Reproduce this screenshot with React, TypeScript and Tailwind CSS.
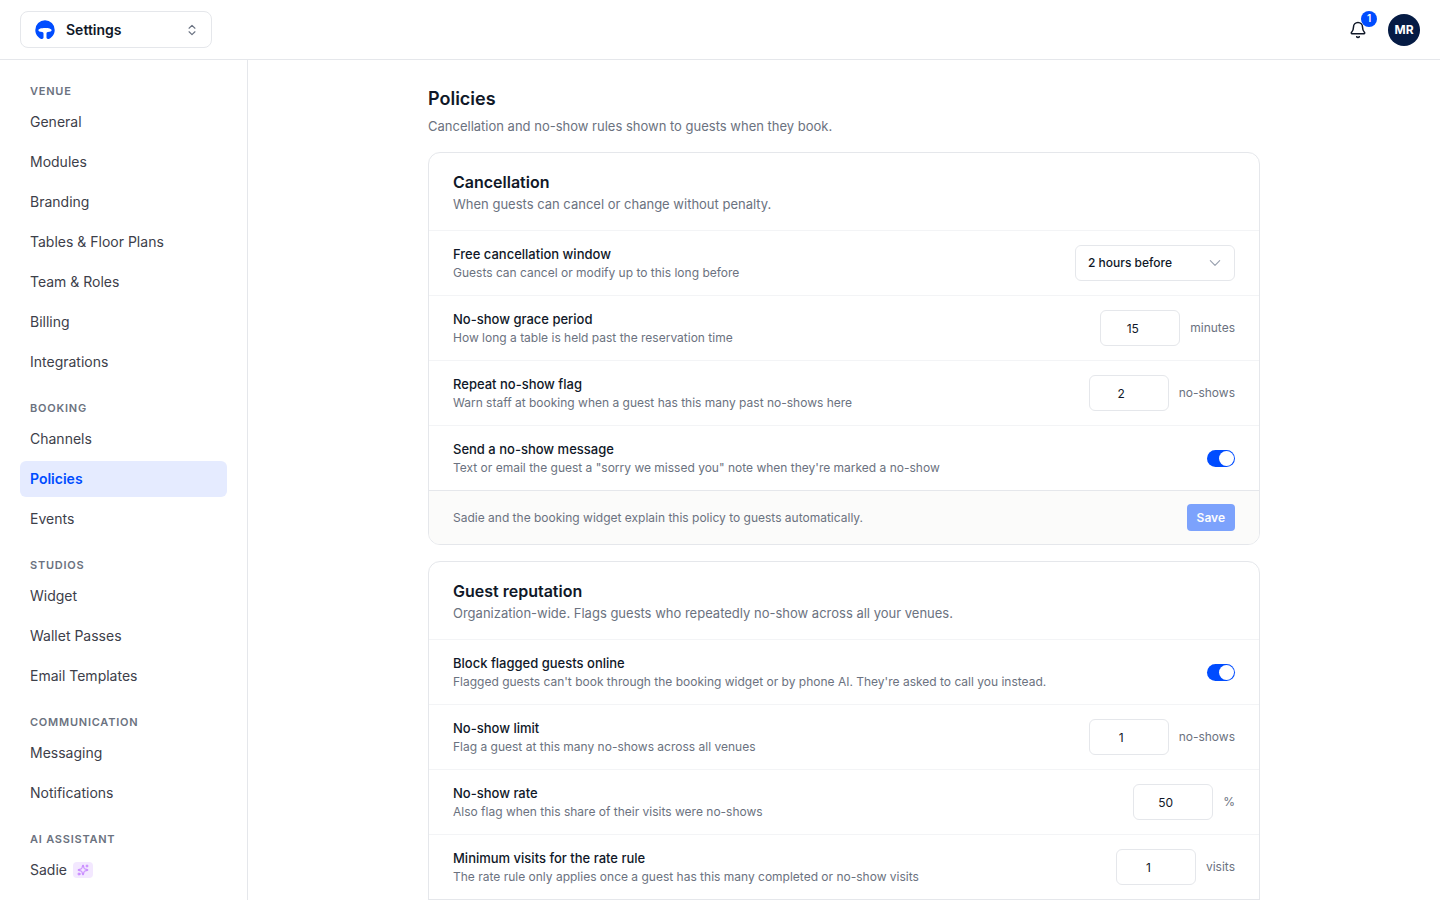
import { useState } from "react";
import { Bell, ChevronsUpDown, Sparkles } from "lucide-react";
import { clsx } from "clsx";

interface NavItem {
  label: string;
  ai?: boolean;
}

const NAV: { title: string; items: NavItem[] }[] = [
  {
    title: "Venue",
    items: [
      { label: "General" },
      { label: "Modules" },
      { label: "Branding" },
      { label: "Tables & Floor Plans" },
      { label: "Team & Roles" },
      { label: "Billing" },
      { label: "Integrations" },
    ],
  },
  {
    title: "Booking",
    items: [{ label: "Channels" }, { label: "Policies" }, { label: "Events" }],
  },
  {
    title: "Studios",
    items: [
      { label: "Widget" },
      { label: "Wallet Passes" },
      { label: "Email Templates" },
    ],
  },
  {
    title: "Communication",
    items: [{ label: "Messaging" }, { label: "Notifications" }],
  },
  { title: "AI Assistant", items: [{ label: "Sadie", ai: true }] },
];

const ACTIVE = "Policies";

function Logo() {
  return (
    <svg viewBox="0 0 20 20" className="size-5" aria-hidden="true">
      <path
        fill="#004cff"
        d="M10 0.2a9.7 9.7 0 0 1 9.7 9.7c0 4.1-2.5 7.600-6 9-1.100.4-2.200-.1-2.200-1.300v-4c0-.9.4-1.400 1.300-1.500 2.300-.3 3.800-1 3.800-1.900 0-1.300-2.900-2.200-6.600-2.200s-6.600.9-6.600 2.200c0 .9 1.500 1.600 3.800 1.900.9.1 1.300.6 1.300 1.500v4c0 1.200-1.100 1.700-2.200 1.300-3.500-1.400-6-4.900-6-9A9.700 9.700 0 0 1 10 .2Z"
      />
    </svg>
  );
}

function Header() {
  return (
    <header className="flex items-center justify-between border-b border-gray-200 px-5 py-[11px]">
      <button
        type="button"
        className="flex h-[37px] w-48 items-center gap-[11px] rounded-lg border border-gray-200 pr-3 pl-3.5 text-left"
      >
        <Logo />
        <span className="flex-1 text-sm font-semibold text-gray-900">
          Settings
        </span>
        <ChevronsUpDown size={14} className="text-gray-500" />
      </button>

      <div className="flex items-center gap-3">
        <button
          type="button"
          aria-label="Notifications, 1 unread"
          className="relative flex size-9 items-center justify-center text-gray-900"
        >
          <Bell size={18} />
          <span className="absolute -top-px -right-px flex size-4 items-center justify-center rounded-full bg-[#004cff] text-[10px] font-semibold text-white">
            1
          </span>
        </button>
        <button
          type="button"
          className="flex size-8 items-center justify-center rounded-full bg-[#051b44] text-xs font-bold text-white"
        >
          MR
        </button>
      </div>
    </header>
  );
}

function Sidebar() {
  return (
    <nav
      aria-label="Settings"
      className="flex w-62 shrink-0 flex-col gap-5 overflow-hidden border-r border-gray-200 px-5 pt-[23px]"
    >
      {NAV.map((group) => (
        <section key={group.title}>
          <h2 className="mb-1 px-2.5 text-[11px] leading-[17px] font-semibold tracking-[0.07em] text-[#6b7280] uppercase">
            {group.title}
          </h2>
          <ul className="space-y-1">
            {group.items.map((item) => (
              <li key={item.label}>
                <a
                  href="#"
                  aria-current={item.label === ACTIVE ? "page" : undefined}
                  className={clsx(
                    "flex h-9 items-center gap-1.5 rounded-md px-2.5 text-sm",
                    item.label === ACTIVE
                      ? "bg-[#e5ebff] font-semibold text-[#004cff]"
                      : "text-[#3d404a] hover:bg-gray-50",
                  )}
                >
                  {item.label}
                  {item.ai && (
                    <span className="flex h-4 w-5 items-center justify-center rounded bg-purple-100 text-purple-400">
                      <Sparkles size={12} />
                    </span>
                  )}
                </a>
              </li>
            ))}
          </ul>
        </section>
      ))}
    </nav>
  );
}

interface CardProps {
  title: string;
  description: string;
  note?: string;
  children: React.ReactNode;
}

function Card({ title, description, note, children }: Readonly<CardProps>) {
  return (
    <section className="overflow-hidden rounded-xl border border-gray-200 bg-white">
      <div className="px-6 pt-[17px] pb-4">
        <h2 className="text-base leading-6 font-semibold text-gray-900">
          {title}
        </h2>
        <p className="text-[13px] leading-5 text-[#6b7280]">{description}</p>
      </div>
      {children}
      <div className="flex min-h-13 items-center justify-between border-t border-gray-200 bg-[#fbfbfa] px-6 py-[13px]">
        {note && (
          <>
            <p className="text-xs text-[#6b7280]">{note}</p>
            <button
              type="button"
              disabled
              className="h-[27px] rounded bg-[#004cff] px-2.5 text-xs font-semibold text-white opacity-50"
            >
              Save
            </button>
          </>
        )}
      </div>
    </section>
  );
}

interface RowProps {
  id: string;
  label: string;
  hint: string;
  children: React.ReactNode;
}

function Row({ id, label, hint, children }: Readonly<RowProps>) {
  return (
    <div className="flex items-center justify-between gap-6 border-t border-gray-100 px-6 py-[13px]">
      <div>
        <label
          htmlFor={id}
          className="block text-[13px] leading-5 font-medium text-gray-900"
        >
          {label}
        </label>
        <p className="text-xs leading-[18px] text-[#6b7280]">{hint}</p>
      </div>
      {children}
    </div>
  );
}

interface NumberFieldProps {
  id: string;
  initial: number;
  unit: string;
}

function NumberField({ id, initial, unit }: Readonly<NumberFieldProps>) {
  const [value, setValue] = useState(String(initial));
  return (
    <div className="flex items-center gap-2.5">
      <input
        id={id}
        type="number"
        value={value}
        onChange={(e) => setValue(e.target.value)}
        className="h-9 w-20 rounded-md border border-gray-200 px-3 text-center text-xs text-gray-900"
      />
      <span className="text-xs text-[#6b7280]">{unit}</span>
    </div>
  );
}

function Toggle({ id }: Readonly<{ id: string }>) {
  return (
    <input
      id={id}
      type="checkbox"
      role="switch"
      defaultChecked
      className="flex h-[17px] w-7 cursor-pointer appearance-none items-center rounded-full bg-gray-300 px-px before:size-[15px] before:rounded-full before:bg-white checked:justify-end checked:bg-[#004cff]"
    />
  );
}

function WindowSelect({ id }: Readonly<{ id: string }>) {
  return (
    <div className="relative">
      <select
        id={id}
        defaultValue="2"
        className="h-9 w-40 appearance-none rounded-md border border-gray-200 bg-white px-3 text-xs font-medium text-gray-900"
      >
        <option value="1">1 hour before</option>
        <option value="2">2 hours before</option>
        <option value="24">24 hours before</option>
      </select>
      <svg
        viewBox="0 0 24 24"
        fill="none"
        stroke="currentColor"
        strokeWidth={1.75}
        strokeLinecap="round"
        strokeLinejoin="round"
        className="pointer-events-none absolute top-2.5 right-3 size-4 text-gray-400"
        aria-hidden="true"
      >
        <path d="m19 8.500-7 7-7-7" />
      </svg>
    </div>
  );
}

export default function App() {
  return (
    <div className="flex h-screen flex-col bg-white font-['Inter',sans-serif] antialiased">
      <Header />
      <div className="flex min-h-0 flex-1">
        <Sidebar />
        <main className="flex-1 overflow-y-auto px-6 pt-6 pb-12 [scrollbar-width:none]">
          <div className="mx-auto max-w-208">
            <h1 className="text-lg leading-[30px] font-semibold text-gray-900">
              Policies
            </h1>
            <p className="mt-0.5 mb-4 text-[13px] leading-5 text-[#6b7280]">
              Cancellation and no-show rules shown to guests when they book.
            </p>

            <div className="space-y-4">
              <Card
                title="Cancellation"
                description="When guests can cancel or change without penalty."
                note="Sadie and the booking widget explain this policy to guests automatically."
              >
                <Row
                  id="window"
                  label="Free cancellation window"
                  hint="Guests can cancel or modify up to this long before"
                >
                  <WindowSelect id="window" />
                </Row>
                <Row
                  id="grace"
                  label="No-show grace period"
                  hint="How long a table is held past the reservation time"
                >
                  <NumberField id="grace" initial={15} unit="minutes" />
                </Row>
                <Row
                  id="repeat"
                  label="Repeat no-show flag"
                  hint="Warn staff at booking when a guest has this many past no-shows here"
                >
                  <NumberField id="repeat" initial={2} unit="no-shows" />
                </Row>
                <Row
                  id="message"
                  label="Send a no-show message"
                  hint={`Text or email the guest a "sorry we missed you" note when they're marked a no-show`}
                >
                  <Toggle id="message" />
                </Row>
              </Card>

              <Card
                title="Guest reputation"
                description="Organization-wide. Flags guests who repeatedly no-show across all your venues."
              >
                <Row
                  id="block"
                  label="Block flagged guests online"
                  hint="Flagged guests can't book through the booking widget or by phone AI. They're asked to call you instead."
                >
                  <Toggle id="block" />
                </Row>
                <Row
                  id="limit"
                  label="No-show limit"
                  hint="Flag a guest at this many no-shows across all venues"
                >
                  <NumberField id="limit" initial={1} unit="no-shows" />
                </Row>
                <Row
                  id="rate"
                  label="No-show rate"
                  hint="Also flag when this share of their visits were no-shows"
                >
                  <NumberField id="rate" initial={50} unit="%" />
                </Row>
                <Row
                  id="minimum"
                  label="Minimum visits for the rate rule"
                  hint="The rate rule only applies once a guest has this many completed or no-show visits"
                >
                  <NumberField id="minimum" initial={1} unit="visits" />
                </Row>
              </Card>
            </div>
          </div>
        </main>
      </div>
    </div>
  );
}
